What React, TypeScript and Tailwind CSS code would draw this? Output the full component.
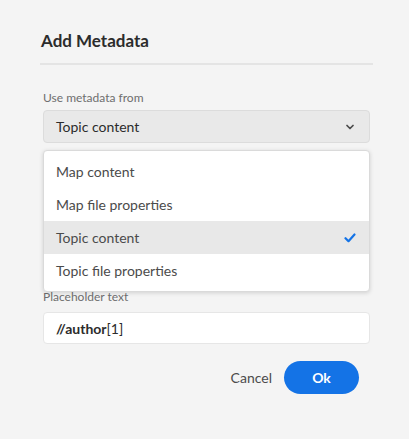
import { ChevronDown } from "lucide-react";

const options = ["Map content", "Map file properties", "Topic content", "Topic file properties"];

export default function App() {
  const selected = "Topic content";

  return (
    <div
      className="h-[439px] w-[409px] bg-[#f4f4f4] px-[40px] pt-[29px]"
      style={{ fontFamily: "Lato, 'Noto Sans', sans-serif" }}
    >
      {/* Header */}
      <h2 className="pl-[1px] text-[17px] font-bold leading-[24px] text-[#2c2c2c]">Add Metadata</h2>
      <div className="mt-[10px] h-[2px] w-[333px] bg-[#e4e4e4]" />

      <div className="mx-[3px] w-[327px]">
        {/* Source field */}
        <label className="mt-[25px] block text-[12px] leading-[16px] text-[#6e6e6e]">Use metadata from</label>
        <button className="mt-[4px] flex h-[33px] w-full items-center justify-between rounded-[4px] border border-[#dcdcdc] bg-[#e9e9e9] pl-[12px] pr-[13px] text-[14px] text-[#2c2c2c]">
          <span>{selected}</span>
          <ChevronDown className="h-[12px] w-[12px] text-[#4b4b4b]" strokeWidth={3.5} />
        </button>

        {/* Options popover */}
        <div className="relative z-10 mt-[7px] rounded-[4px] border border-[#dadada] bg-white py-[4px] shadow-[0_1px_4px_rgba(0,0,0,0.15)]">
          {options.map((o) => (
            <div
              key={o}
              className={`flex h-[33px] items-center justify-between pl-[12px] pr-[13px] text-[14px] text-[#4b4b4b] ${
                o === selected ? "bg-[#e8e8e8]" : ""
              }`}
            >
              <span>{o}</span>
              {o === selected && (
                <svg viewBox="0 0 12 10" className="h-[10px] w-[12px]">
                  <path d="M1.5 5.2 4.5 8.2 10.5 1.5" fill="none" stroke="#1473e6" strokeWidth="2.2" strokeLinecap="round" strokeLinejoin="round" />
                </svg>
              )}
            </div>
          ))}
        </div>

        {/* Placeholder field */}
        <label className="-mt-[3px] block text-[12px] leading-[16px] text-[#6e6e6e]">Placeholder text</label>
        <div className="mt-[7px] flex h-[32px] items-center rounded-[4px] border border-[#e6e6e6] bg-white pl-[12px] text-[14px] text-[#2c2c2c]">
          <span className="font-bold">//author</span>
          <span>[1]</span>
        </div>

        {/* Actions */}
        <div className="mt-[17px] flex items-center justify-end gap-[12px] pr-[11px]">
          <button className="text-[14px] text-[#4b4b4b]">Cancel</button>
          <button className="h-[33px] w-[75px] rounded-full bg-[#1473e6] text-[14px] font-bold text-white">Ok</button>
        </div>
      </div>
    </div>
  );
}
